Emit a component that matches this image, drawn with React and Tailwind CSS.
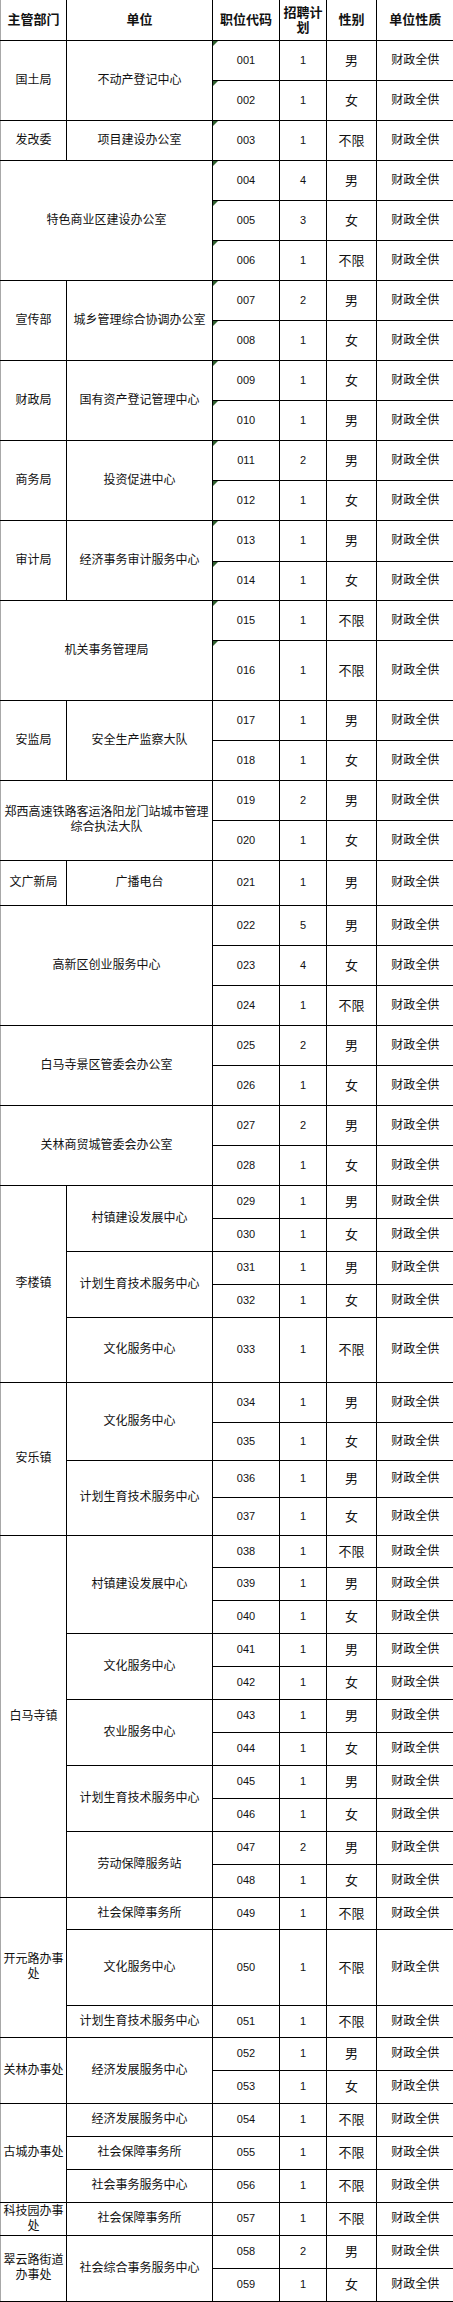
import React from "react";

// row heights, written out so Tailwind picks them up
const H = {
  32: "h-[32px]",
  33: "h-[33px]",
  37: "h-[37px]",
  38: "h-[38px]",
  39: "h-[39px]",
  40: "h-[40px]",
  41: "h-[41px]",
  45: "h-[45px]",
  60: "h-[60px]",
  65: "h-[65px]",
  76: "h-[76px]",
};

const r = (code, num, sex, h = 40) => ({ code, num, sex, h });

// dept === null means the unit spans both of the first two columns
const groups = [
  { dept: "国土局", units: [{ name: "不动产登记中心", rows: [r("001", 1, "男"), r("002", 1, "女")] }] },
  { dept: "发改委", units: [{ name: "项目建设办公室", rows: [r("003", 1, "不限")] }] },
  { dept: null, units: [{ name: "特色商业区建设办公室", rows: [r("004", 4, "男"), r("005", 3, "女"), r("006", 1, "不限")] }] },
  { dept: "宣传部", units: [{ name: "城乡管理综合协调办公室", rows: [r("007", 2, "男"), r("008", 1, "女")] }] },
  { dept: "财政局", units: [{ name: "国有资产登记管理中心", rows: [r("009", 1, "女"), r("010", 1, "男")] }] },
  { dept: "商务局", units: [{ name: "投资促进中心", rows: [r("011", 2, "男"), r("012", 1, "女")] }] },
  { dept: "审计局", units: [{ name: "经济事务审计服务中心", rows: [r("013", 1, "男", 41), r("014", 1, "女", 39)] }] },
  { dept: null, units: [{ name: "机关事务管理局", rows: [r("015", 1, "不限"), r("016", 1, "不限", 60)] }] },
  { dept: "安监局", units: [{ name: "安全生产监察大队", rows: [r("017", 1, "男"), r("018", 1, "女")] }] },
  { dept: null, units: [{ name: "郑西高速铁路客运洛阳龙门站城市管理综合执法大队", rows: [r("019", 2, "男"), r("020", 1, "女")] }] },
  { dept: "文广新局", units: [{ name: "广播电台", rows: [r("021", 1, "男", 45)] }] },
  { dept: null, units: [{ name: "高新区创业服务中心", rows: [r("022", 5, "男"), r("023", 4, "女"), r("024", 1, "不限")] }] },
  { dept: null, units: [{ name: "白马寺景区管委会办公室", rows: [r("025", 2, "男"), r("026", 1, "女")] }] },
  { dept: null, units: [{ name: "关林商贸城管委会办公室", rows: [r("027", 2, "男"), r("028", 1, "女")] }] },
  {
    dept: "李楼镇",
    units: [
      { name: "村镇建设发展中心", rows: [r("029", 1, "男", 33), r("030", 1, "女", 33)] },
      { name: "计划生育技术服务中心", rows: [r("031", 1, "男", 33), r("032", 1, "女", 33)] },
      { name: "文化服务中心", rows: [r("033", 1, "不限", 65)] },
    ],
  },
  {
    dept: "安乐镇",
    units: [
      { name: "文化服务中心", rows: [r("034", 1, "男", 40), r("035", 1, "女", 38)] },
      { name: "计划生育技术服务中心", rows: [r("036", 1, "男", 37), r("037", 1, "女", 38)] },
    ],
  },
  {
    dept: "白马寺镇",
    units: [
      { name: "村镇建设发展中心", rows: [r("038", 1, "不限", 32), r("039", 1, "男", 33), r("040", 1, "女", 33)] },
      { name: "文化服务中心", rows: [r("041", 1, "男", 33), r("042", 1, "女", 33)] },
      { name: "农业服务中心", rows: [r("043", 1, "男", 33), r("044", 1, "女", 33)] },
      { name: "计划生育技术服务中心", rows: [r("045", 1, "男", 33), r("046", 1, "女", 33)] },
      { name: "劳动保障服务站", rows: [r("047", 2, "男", 33), r("048", 1, "女", 33)] },
    ],
  },
  {
    dept: "开元路办事处",
    units: [
      { name: "社会保障事务所", rows: [r("049", 1, "不限", 32)] },
      { name: "文化服务中心", rows: [r("050", 1, "不限", 76)] },
      { name: "计划生育技术服务中心", rows: [r("051", 1, "不限", 32)] },
    ],
  },
  { dept: "关林办事处", units: [{ name: "经济发展服务中心", rows: [r("052", 1, "男", 33), r("053", 1, "女", 33)] }] },
  {
    dept: "古城办事处",
    units: [
      { name: "经济发展服务中心", rows: [r("054", 1, "不限", 33)] },
      { name: "社会保障事务所", rows: [r("055", 1, "不限", 33)] },
      { name: "社会事务服务中心", rows: [r("056", 1, "不限", 33)] },
    ],
  },
  { dept: "科技园办事处", units: [{ name: "社会保障事务所", rows: [r("057", 1, "不限", 33)] }] },
  { dept: "翠云路街道办事处", units: [{ name: "社会综合事务服务中心", rows: [r("058", 2, "男", 33), r("059", 1, "女", 33)] }] },
];

// codes that carry the little green excel marker
const marked = (code) => Number(code) <= 16;

const cell = "border border-black px-[2px] text-center align-middle leading-[15px]";

export default function App() {
  const body = [];
  groups.forEach((g, gi) => {
    const total = g.units.reduce((s, u) => s + u.rows.length, 0);
    g.units.forEach((u, ui) => {
      u.rows.forEach((row, ri) => {
        body.push(
          <tr key={row.code} className={H[row.h]}>
            {g.dept && ui === 0 && ri === 0 && (
              <td rowSpan={total} className={`${cell} border-l-[#a8a8a8]`}>
                {g.dept}
              </td>
            )}
            {ri === 0 && (
              <td
                rowSpan={u.rows.length}
                colSpan={g.dept ? 1 : 2}
                className={`${cell} ${g.dept ? "" : "border-l-[#a8a8a8]"}`}
              >
                {u.name}
              </td>
            )}
            <td className={`${cell} relative text-[11px]`}>
              {marked(row.code) && (
                <span className="absolute left-0 top-0 w-0 h-0 border-t-[5px] border-r-[5px] border-t-[#2d5e2d] border-r-transparent" />
              )}
              {row.code}
            </td>
            <td className={`${cell} text-[11px]`}>{row.num}</td>
            <td className={`${cell} text-[13px]`}>{row.sex}</td>
            <td className={`${cell} border-r-0`}>财政全供</td>
          </tr>
        );
      });
    });
  });

  return (
    <div className="w-[453px] bg-white text-[#111] font-['Liberation_Sans','Noto_Sans_CJK_SC',sans-serif] text-[12px]">
      <table className="w-[453px] table-fixed border-collapse">
        <colgroup>
          <col className="w-[66px]" />
          <col className="w-[146px]" />
          <col className="w-[67px]" />
          <col className="w-[47px]" />
          <col className="w-[50px]" />
          <col className="w-[77px]" />
        </colgroup>
        <thead>
          <tr className="h-[40px] text-[13px] font-bold">
            <td className={`${cell} border-t-0 border-l-[#a8a8a8]`}>主管部门</td>
            <td className={`${cell} border-t-0`}>单位</td>
            <td className={`${cell} border-t-0`}>职位代码</td>
            <td className={`${cell} border-t-0`}>招聘计划</td>
            <td className={`${cell} border-t-0`}>性别</td>
            <td className={`${cell} border-t-0 border-r-0`}>单位性质</td>
          </tr>
        </thead>
        <tbody>{body}</tbody>
      </table>
    </div>
  );
}
